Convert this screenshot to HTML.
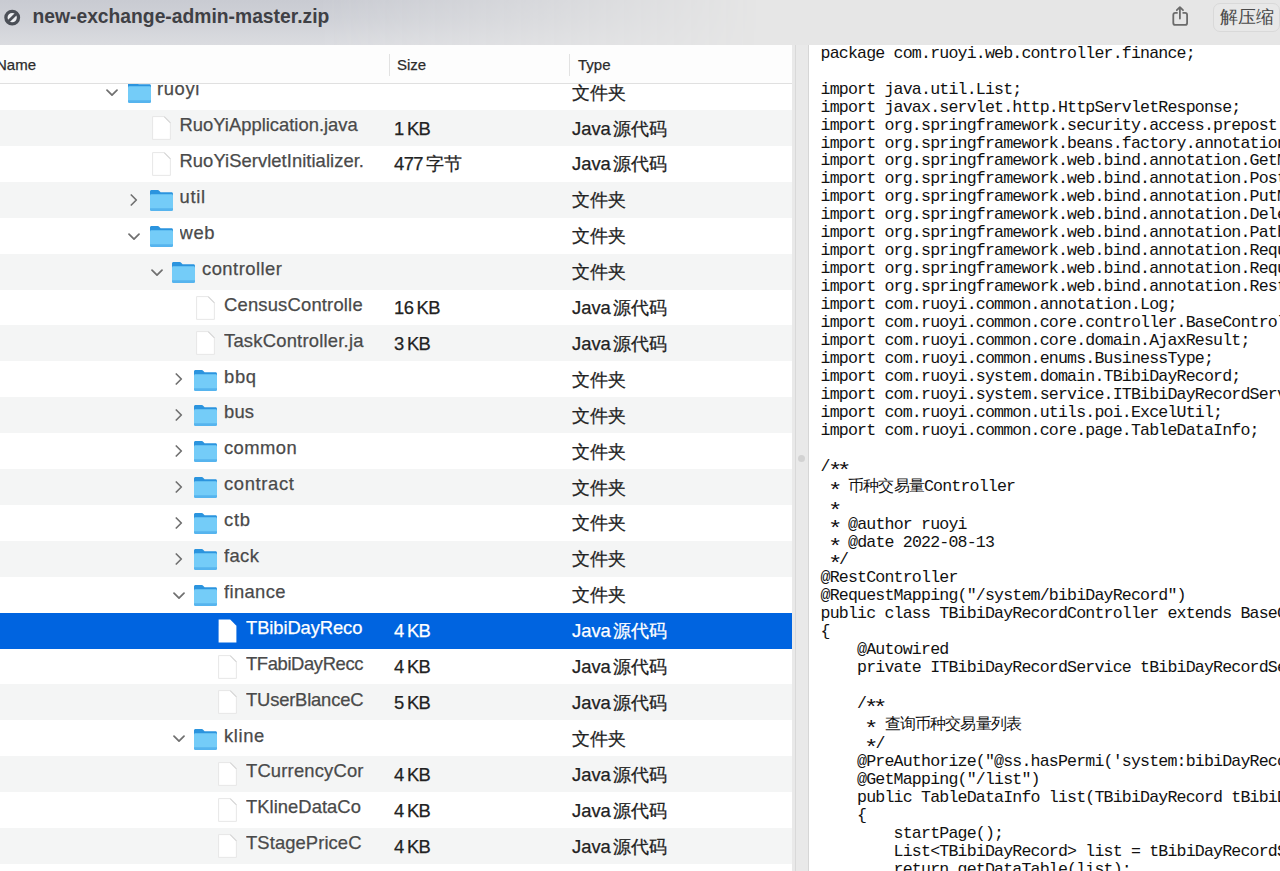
<!DOCTYPE html>
<html><head><meta charset="utf-8"><style>
*{margin:0;padding:0;box-sizing:border-box}
html,body{width:1280px;height:871px;overflow:hidden;background:#fff}
body{position:relative;font-family:"Liberation Sans",sans-serif}
#title{position:absolute;left:0;top:0;width:1280px;height:45px;background:#e6e6e6}
#title .bg{position:absolute;left:0;top:0;width:760px;height:45px;background:linear-gradient(180deg,#c9cbd2 0%,#cfd1d7 45%,#dbdce0 100%);-webkit-mask-image:linear-gradient(90deg,#000 0%,#000 42%,rgba(0,0,0,0.6) 65%,transparent 100%)}
#title .t{position:absolute;left:32.5px;top:5.2px;font-size:19.3px;font-weight:bold;color:#3f4045;line-height:24px;white-space:nowrap}
#left{position:absolute;left:0;top:45px;width:792px;height:826px;overflow:hidden;background:#fff}
#hdr{position:absolute;left:0;top:0;width:792px;height:39px;background:#fdfdfd;border-bottom:1px solid #e0e0e0;z-index:5}
#hdr span{position:absolute;top:11px;font-size:15px;color:#2c2c2c;line-height:18px}
#hdr i{position:absolute;top:9px;width:1px;height:22px;background:#e2e2e2}
.row{position:absolute;left:0;width:792px;height:36px}
.g{background:#f4f5f5}
.sel{background:#0064e0}
.row .n{position:absolute;top:4.3px;font-size:18.4px;line-height:22px;color:#4a4a4a;white-space:nowrap;overflow:hidden;width:auto}
.row .s{position:absolute;left:394px;word-spacing:-1.2px;letter-spacing:-0.6px;top:7.5px;font-size:18.4px;line-height:22px;color:#222;white-space:nowrap}
.row .ty{position:absolute;left:572px;word-spacing:-3px;top:7.5px;font-size:18.4px;line-height:22px;color:#222;white-space:nowrap}
.sel .n,.sel .s,.sel .ty{color:#fff}
.row .n,.row .s,.row .ty,#hdr span{-webkit-text-stroke:0.25px currentColor}
.row svg{position:absolute}
#div{position:absolute;left:792px;top:45px;width:17px;height:826px;background:#e9e9e9}
#div .l1{position:absolute;left:3px;top:0;width:1px;height:826px;background:#d9d9d9}
#div .l2{position:absolute;left:16px;top:0;width:1px;height:826px;background:#d6d6d6}
#div .dot{position:absolute;left:6px;top:410px;width:7px;height:7px;border-radius:50%;background:#d2d2d2}
#code{position:absolute;left:809px;top:45px;width:471px;height:826px;background:#fff;overflow:hidden}
#code .cj{font-size:15.7px}
#code .ast{display:inline-block;transform:translateY(4.9px) scale(1.45,1.2)}
#code div{position:absolute;left:11.6px;font-family:"Liberation Mono",monospace;font-size:16.6px;letter-spacing:-0.83px;line-height:18px;color:#111;white-space:pre}
</style></head><body>

<div id="title"><div class="bg"></div><svg style="position:absolute;left:4px;top:9px" width="17" height="17" viewBox="0 0 17 17"><circle cx="8.2" cy="8.6" r="6.3" fill="#eeeff2" stroke="#4b4f57" stroke-width="3.3"/><path d="M4.6 12.3L12 4.9" stroke="#4b4f57" stroke-width="2.8"/></svg><div class="t">new-exchange-admin-master.zip</div>
<svg style="position:absolute;left:1164px;top:0px" width="32" height="32" viewBox="0 0 32 32"><path d="M13.7 12.9H11.3A2 2 0 0 0 9.3 14.9V22.9A2 2 0 0 0 11.3 24.9H21.1A2 2 0 0 0 23.1 22.9V14.9A2 2 0 0 0 21.1 12.9H18.5" fill="none" stroke="#6b6b6b" stroke-width="1.8"/><path d="M15.9 7.4V18.6M12.8 10.2L15.9 7.1L19 10.2" fill="none" stroke="#6b6b6b" stroke-width="1.8" stroke-linecap="round" stroke-linejoin="round"/></svg>
<div style="position:absolute;left:1212.5px;top:3px;width:67px;height:29px;border-radius:7px;background:#e8e8e8;border:1px solid #d9d9d9"></div><div style="position:absolute;left:1219.5px;top:6px;font-size:18px;line-height:22px;color:#4a4a4a;white-space:nowrap">解压缩</div>
</div>
<div id="left">
<div class="row" style="top:29.10px"><svg style="left:105.5px;top:15px" width="12" height="8"><path d="M1 1.2l5 5 5-5" fill="none" stroke="#707070" stroke-width="1.7" stroke-linecap="round" stroke-linejoin="round"/></svg><svg style="left:128px;top:8.3px" width="23" height="21"><path d="M0 1.6C0 0.6 0.6 0 1.6 0H7.6C8.4 0 8.9 0.3 9.4 0.9L10.6 2.3H21.4C22.4 2.3 23 2.9 23 3.9V8H0Z" fill="#2b94de"/><rect x="0" y="4.2" width="23" height="16.8" rx="1.4" fill="#74ccf8"/><path d="M0 18.2H23V19.6C23 20.5 22.5 21 21.6 21H1.4C0.5 21 0 20.5 0 19.6Z" fill="#56b4ee"/></svg><div class="n" style="left:157px;width:209.0px;letter-spacing:0.6px">ruoyi</div><div class="ty">文件夹</div></div>
<div class="row g" style="top:65.00px"><svg style="left:151.5px;top:6px" width="19" height="24"><path d="M0.6 0.6h11.6l6.2 6.2v16.6h-17.8z" fill="#ffffff" stroke="#e4e4e4" stroke-width="0.9"/><path d="M12.2 0.6l6.2 6.2" stroke="#d6d6d6" stroke-width="1.1"/></svg><div class="n" style="left:179.5px;width:186.5px;letter-spacing:0px">RuoYiApplication.java</div><div class="s">1 KB</div><div class="ty">Java 源代码</div></div>
<div class="row" style="top:100.90px"><svg style="left:151.5px;top:6px" width="19" height="24"><path d="M0.6 0.6h11.6l6.2 6.2v16.6h-17.8z" fill="#ffffff" stroke="#e4e4e4" stroke-width="0.9"/><path d="M12.2 0.6l6.2 6.2" stroke="#d6d6d6" stroke-width="1.1"/></svg><div class="n" style="left:179.5px;width:186.5px;letter-spacing:0.05px">RuoYiServletInitializer.</div><div class="s">477 字节</div><div class="ty">Java 源代码</div></div>
<div class="row g" style="top:136.80px"><svg style="left:130.0px;top:12px" width="8" height="12"><path d="M1.3 1l5 5-5 5" fill="none" stroke="#707070" stroke-width="1.7" stroke-linecap="round" stroke-linejoin="round"/></svg><svg style="left:150px;top:8.3px" width="23" height="21"><path d="M0 1.6C0 0.6 0.6 0 1.6 0H7.6C8.4 0 8.9 0.3 9.4 0.9L10.6 2.3H21.4C22.4 2.3 23 2.9 23 3.9V8H0Z" fill="#2b94de"/><rect x="0" y="4.2" width="23" height="16.8" rx="1.4" fill="#74ccf8"/><path d="M0 18.2H23V19.6C23 20.5 22.5 21 21.6 21H1.4C0.5 21 0 20.5 0 19.6Z" fill="#56b4ee"/></svg><div class="n" style="left:179.5px;width:186.5px;letter-spacing:0.7px">util</div><div class="ty">文件夹</div></div>
<div class="row" style="top:172.70px"><svg style="left:128.0px;top:15px" width="12" height="8"><path d="M1 1.2l5 5 5-5" fill="none" stroke="#707070" stroke-width="1.7" stroke-linecap="round" stroke-linejoin="round"/></svg><svg style="left:150px;top:8.3px" width="23" height="21"><path d="M0 1.6C0 0.6 0.6 0 1.6 0H7.6C8.4 0 8.9 0.3 9.4 0.9L10.6 2.3H21.4C22.4 2.3 23 2.9 23 3.9V8H0Z" fill="#2b94de"/><rect x="0" y="4.2" width="23" height="16.8" rx="1.4" fill="#74ccf8"/><path d="M0 18.2H23V19.6C23 20.5 22.5 21 21.6 21H1.4C0.5 21 0 20.5 0 19.6Z" fill="#56b4ee"/></svg><div class="n" style="left:179.5px;width:186.5px;letter-spacing:0.6px">web</div><div class="ty">文件夹</div></div>
<div class="row g" style="top:208.60px"><svg style="left:150.5px;top:15px" width="12" height="8"><path d="M1 1.2l5 5 5-5" fill="none" stroke="#707070" stroke-width="1.7" stroke-linecap="round" stroke-linejoin="round"/></svg><svg style="left:172px;top:8.3px" width="23" height="21"><path d="M0 1.6C0 0.6 0.6 0 1.6 0H7.6C8.4 0 8.9 0.3 9.4 0.9L10.6 2.3H21.4C22.4 2.3 23 2.9 23 3.9V8H0Z" fill="#2b94de"/><rect x="0" y="4.2" width="23" height="16.8" rx="1.4" fill="#74ccf8"/><path d="M0 18.2H23V19.6C23 20.5 22.5 21 21.6 21H1.4C0.5 21 0 20.5 0 19.6Z" fill="#56b4ee"/></svg><div class="n" style="left:202px;width:164.0px;letter-spacing:0.47px">controller</div><div class="ty">文件夹</div></div>
<div class="row" style="top:244.50px"><svg style="left:196.0px;top:6px" width="19" height="24"><path d="M0.6 0.6h11.6l6.2 6.2v16.6h-17.8z" fill="#ffffff" stroke="#e4e4e4" stroke-width="0.9"/><path d="M12.2 0.6l6.2 6.2" stroke="#d6d6d6" stroke-width="1.1"/></svg><div class="n" style="left:224px;width:142.0px;letter-spacing:0.19px">CensusControlle</div><div class="s">16 KB</div><div class="ty">Java 源代码</div></div>
<div class="row g" style="top:280.40px"><svg style="left:196.0px;top:6px" width="19" height="24"><path d="M0.6 0.6h11.6l6.2 6.2v16.6h-17.8z" fill="#ffffff" stroke="#e4e4e4" stroke-width="0.9"/><path d="M12.2 0.6l6.2 6.2" stroke="#d6d6d6" stroke-width="1.1"/></svg><div class="n" style="left:224px;width:142.0px;letter-spacing:0.22px">TaskController.ja</div><div class="s">3 KB</div><div class="ty">Java 源代码</div></div>
<div class="row" style="top:316.30px"><svg style="left:174.5px;top:12px" width="8" height="12"><path d="M1.3 1l5 5-5 5" fill="none" stroke="#707070" stroke-width="1.7" stroke-linecap="round" stroke-linejoin="round"/></svg><svg style="left:194px;top:8.3px" width="23" height="21"><path d="M0 1.6C0 0.6 0.6 0 1.6 0H7.6C8.4 0 8.9 0.3 9.4 0.9L10.6 2.3H21.4C22.4 2.3 23 2.9 23 3.9V8H0Z" fill="#2b94de"/><rect x="0" y="4.2" width="23" height="16.8" rx="1.4" fill="#74ccf8"/><path d="M0 18.2H23V19.6C23 20.5 22.5 21 21.6 21H1.4C0.5 21 0 20.5 0 19.6Z" fill="#56b4ee"/></svg><div class="n" style="left:224px;width:142.0px;letter-spacing:0.7px">bbq</div><div class="ty">文件夹</div></div>
<div class="row g" style="top:352.20px"><svg style="left:174.5px;top:12px" width="8" height="12"><path d="M1.3 1l5 5-5 5" fill="none" stroke="#707070" stroke-width="1.7" stroke-linecap="round" stroke-linejoin="round"/></svg><svg style="left:194px;top:8.3px" width="23" height="21"><path d="M0 1.6C0 0.6 0.6 0 1.6 0H7.6C8.4 0 8.9 0.3 9.4 0.9L10.6 2.3H21.4C22.4 2.3 23 2.9 23 3.9V8H0Z" fill="#2b94de"/><rect x="0" y="4.2" width="23" height="16.8" rx="1.4" fill="#74ccf8"/><path d="M0 18.2H23V19.6C23 20.5 22.5 21 21.6 21H1.4C0.5 21 0 20.5 0 19.6Z" fill="#56b4ee"/></svg><div class="n" style="left:224px;width:142.0px;letter-spacing:0.2px">bus</div><div class="ty">文件夹</div></div>
<div class="row" style="top:388.10px"><svg style="left:174.5px;top:12px" width="8" height="12"><path d="M1.3 1l5 5-5 5" fill="none" stroke="#707070" stroke-width="1.7" stroke-linecap="round" stroke-linejoin="round"/></svg><svg style="left:194px;top:8.3px" width="23" height="21"><path d="M0 1.6C0 0.6 0.6 0 1.6 0H7.6C8.4 0 8.9 0.3 9.4 0.9L10.6 2.3H21.4C22.4 2.3 23 2.9 23 3.9V8H0Z" fill="#2b94de"/><rect x="0" y="4.2" width="23" height="16.8" rx="1.4" fill="#74ccf8"/><path d="M0 18.2H23V19.6C23 20.5 22.5 21 21.6 21H1.4C0.5 21 0 20.5 0 19.6Z" fill="#56b4ee"/></svg><div class="n" style="left:224px;width:142.0px;letter-spacing:0.42px">common</div><div class="ty">文件夹</div></div>
<div class="row g" style="top:424.00px"><svg style="left:174.5px;top:12px" width="8" height="12"><path d="M1.3 1l5 5-5 5" fill="none" stroke="#707070" stroke-width="1.7" stroke-linecap="round" stroke-linejoin="round"/></svg><svg style="left:194px;top:8.3px" width="23" height="21"><path d="M0 1.6C0 0.6 0.6 0 1.6 0H7.6C8.4 0 8.9 0.3 9.4 0.9L10.6 2.3H21.4C22.4 2.3 23 2.9 23 3.9V8H0Z" fill="#2b94de"/><rect x="0" y="4.2" width="23" height="16.8" rx="1.4" fill="#74ccf8"/><path d="M0 18.2H23V19.6C23 20.5 22.5 21 21.6 21H1.4C0.5 21 0 20.5 0 19.6Z" fill="#56b4ee"/></svg><div class="n" style="left:224px;width:142.0px;letter-spacing:0.64px">contract</div><div class="ty">文件夹</div></div>
<div class="row" style="top:459.90px"><svg style="left:174.5px;top:12px" width="8" height="12"><path d="M1.3 1l5 5-5 5" fill="none" stroke="#707070" stroke-width="1.7" stroke-linecap="round" stroke-linejoin="round"/></svg><svg style="left:194px;top:8.3px" width="23" height="21"><path d="M0 1.6C0 0.6 0.6 0 1.6 0H7.6C8.4 0 8.9 0.3 9.4 0.9L10.6 2.3H21.4C22.4 2.3 23 2.9 23 3.9V8H0Z" fill="#2b94de"/><rect x="0" y="4.2" width="23" height="16.8" rx="1.4" fill="#74ccf8"/><path d="M0 18.2H23V19.6C23 20.5 22.5 21 21.6 21H1.4C0.5 21 0 20.5 0 19.6Z" fill="#56b4ee"/></svg><div class="n" style="left:224px;width:142.0px;letter-spacing:0.7px">ctb</div><div class="ty">文件夹</div></div>
<div class="row g" style="top:495.80px"><svg style="left:174.5px;top:12px" width="8" height="12"><path d="M1.3 1l5 5-5 5" fill="none" stroke="#707070" stroke-width="1.7" stroke-linecap="round" stroke-linejoin="round"/></svg><svg style="left:194px;top:8.3px" width="23" height="21"><path d="M0 1.6C0 0.6 0.6 0 1.6 0H7.6C8.4 0 8.9 0.3 9.4 0.9L10.6 2.3H21.4C22.4 2.3 23 2.9 23 3.9V8H0Z" fill="#2b94de"/><rect x="0" y="4.2" width="23" height="16.8" rx="1.4" fill="#74ccf8"/><path d="M0 18.2H23V19.6C23 20.5 22.5 21 21.6 21H1.4C0.5 21 0 20.5 0 19.6Z" fill="#56b4ee"/></svg><div class="n" style="left:224px;width:142.0px;letter-spacing:0.37px">fack</div><div class="ty">文件夹</div></div>
<div class="row" style="top:531.70px"><svg style="left:172.5px;top:15px" width="12" height="8"><path d="M1 1.2l5 5 5-5" fill="none" stroke="#707070" stroke-width="1.7" stroke-linecap="round" stroke-linejoin="round"/></svg><svg style="left:194px;top:8.3px" width="23" height="21"><path d="M0 1.6C0 0.6 0.6 0 1.6 0H7.6C8.4 0 8.9 0.3 9.4 0.9L10.6 2.3H21.4C22.4 2.3 23 2.9 23 3.9V8H0Z" fill="#2b94de"/><rect x="0" y="4.2" width="23" height="16.8" rx="1.4" fill="#74ccf8"/><path d="M0 18.2H23V19.6C23 20.5 22.5 21 21.6 21H1.4C0.5 21 0 20.5 0 19.6Z" fill="#56b4ee"/></svg><div class="n" style="left:224px;width:142.0px;letter-spacing:0.35px">finance</div><div class="ty">文件夹</div></div>
<div class="row sel" style="top:567.60px"><svg style="left:218.0px;top:6px" width="19" height="24"><path d="M0.6 0.6h11.6l6.2 6.2v16.6h-17.8z" fill="#ffffff"/></svg><div class="n" style="left:246px;width:120.0px;letter-spacing:-0.1px">TBibiDayReco</div><div class="s">4 KB</div><div class="ty">Java 源代码</div></div>
<div class="row" style="top:603.50px"><svg style="left:218.0px;top:6px" width="19" height="24"><path d="M0.6 0.6h11.6l6.2 6.2v16.6h-17.8z" fill="#ffffff" stroke="#e4e4e4" stroke-width="0.9"/><path d="M12.2 0.6l6.2 6.2" stroke="#d6d6d6" stroke-width="1.1"/></svg><div class="n" style="left:246px;width:120.0px;letter-spacing:-0.38px">TFabiDayRecc</div><div class="s">4 KB</div><div class="ty">Java 源代码</div></div>
<div class="row g" style="top:639.40px"><svg style="left:218.0px;top:6px" width="19" height="24"><path d="M0.6 0.6h11.6l6.2 6.2v16.6h-17.8z" fill="#ffffff" stroke="#e4e4e4" stroke-width="0.9"/><path d="M12.2 0.6l6.2 6.2" stroke="#d6d6d6" stroke-width="1.1"/></svg><div class="n" style="left:246px;width:120.0px;letter-spacing:-0.19px">TUserBlanceC</div><div class="s">5 KB</div><div class="ty">Java 源代码</div></div>
<div class="row" style="top:675.30px"><svg style="left:172.5px;top:15px" width="12" height="8"><path d="M1 1.2l5 5 5-5" fill="none" stroke="#707070" stroke-width="1.7" stroke-linecap="round" stroke-linejoin="round"/></svg><svg style="left:194px;top:8.3px" width="23" height="21"><path d="M0 1.6C0 0.6 0.6 0 1.6 0H7.6C8.4 0 8.9 0.3 9.4 0.9L10.6 2.3H21.4C22.4 2.3 23 2.9 23 3.9V8H0Z" fill="#2b94de"/><rect x="0" y="4.2" width="23" height="16.8" rx="1.4" fill="#74ccf8"/><path d="M0 18.2H23V19.6C23 20.5 22.5 21 21.6 21H1.4C0.5 21 0 20.5 0 19.6Z" fill="#56b4ee"/></svg><div class="n" style="left:224px;width:142.0px;letter-spacing:0.6px">kline</div><div class="ty">文件夹</div></div>
<div class="row g" style="top:711.20px"><svg style="left:218.0px;top:6px" width="19" height="24"><path d="M0.6 0.6h11.6l6.2 6.2v16.6h-17.8z" fill="#ffffff" stroke="#e4e4e4" stroke-width="0.9"/><path d="M12.2 0.6l6.2 6.2" stroke="#d6d6d6" stroke-width="1.1"/></svg><div class="n" style="left:246px;width:120.0px;letter-spacing:0.18px">TCurrencyCor</div><div class="s">4 KB</div><div class="ty">Java 源代码</div></div>
<div class="row" style="top:747.10px"><svg style="left:218.0px;top:6px" width="19" height="24"><path d="M0.6 0.6h11.6l6.2 6.2v16.6h-17.8z" fill="#ffffff" stroke="#e4e4e4" stroke-width="0.9"/><path d="M12.2 0.6l6.2 6.2" stroke="#d6d6d6" stroke-width="1.1"/></svg><div class="n" style="left:246px;width:120.0px;letter-spacing:0.04px">TKlineDataCo</div><div class="s">4 KB</div><div class="ty">Java 源代码</div></div>
<div class="row g" style="top:783.00px"><svg style="left:218.0px;top:6px" width="19" height="24"><path d="M0.6 0.6h11.6l6.2 6.2v16.6h-17.8z" fill="#ffffff" stroke="#e4e4e4" stroke-width="0.9"/><path d="M12.2 0.6l6.2 6.2" stroke="#d6d6d6" stroke-width="1.1"/></svg><div class="n" style="left:246px;width:120.0px;letter-spacing:0.09px">TStagePriceC</div><div class="s">4 KB</div><div class="ty">Java 源代码</div></div>
<div id="hdr"><span style="left:-4px">Name</span><i style="left:389px"></i><span style="left:397px">Size</span><i style="left:569px"></i><span style="left:578px">Type</span></div>
</div>
<div id="div"><div class="l1"></div><div class="l2"></div><div class="dot"></div></div>
<div id="code"><div style="top:-0.22px">package com.ruoyi.web.controller.finance;</div><div style="top:35.68px">import java.util.List;</div><div style="top:53.63px">import javax.servlet.http.HttpServletResponse;</div><div style="top:71.58px">import org.springframework.security.access.prepost.PreAuthorize;</div><div style="top:89.53px">import org.springframework.beans.factory.annotation.Autowired;</div><div style="top:107.48px">import org.springframework.web.bind.annotation.GetMapping;</div><div style="top:125.43px">import org.springframework.web.bind.annotation.PostMapping;</div><div style="top:143.38px">import org.springframework.web.bind.annotation.PutMapping;</div><div style="top:161.33px">import org.springframework.web.bind.annotation.DeleteMapping;</div><div style="top:179.28px">import org.springframework.web.bind.annotation.PathVariable;</div><div style="top:197.23px">import org.springframework.web.bind.annotation.RequestBody;</div><div style="top:215.18px">import org.springframework.web.bind.annotation.RequestMapping;</div><div style="top:233.13px">import org.springframework.web.bind.annotation.RestController;</div><div style="top:251.08px">import com.ruoyi.common.annotation.Log;</div><div style="top:269.03px">import com.ruoyi.common.core.controller.BaseController;</div><div style="top:286.98px">import com.ruoyi.common.core.domain.AjaxResult;</div><div style="top:304.93px">import com.ruoyi.common.enums.BusinessType;</div><div style="top:322.88px">import com.ruoyi.system.domain.TBibiDayRecord;</div><div style="top:340.83px">import com.ruoyi.system.service.ITBibiDayRecordService;</div><div style="top:358.78px">import com.ruoyi.common.utils.poi.ExcelUtil;</div><div style="top:376.73px">import com.ruoyi.common.core.page.TableDataInfo;</div><div style="top:412.63px">/<span class="ast">*</span><span class="ast">*</span></div><div style="top:433.28px"> <span class="ast">*</span> <span class="cj">币种交易量</span>Controller</div><div style="top:452.63px"> <span class="ast">*</span> </div><div style="top:470.58px"> <span class="ast">*</span> @author ruoyi</div><div style="top:488.53px"> <span class="ast">*</span> @date 2022-08-13</div><div style="top:506.48px"> <span class="ast">*</span>/</div><div style="top:524.43px">@RestController</div><div style="top:542.38px">@RequestMapping(&quot;/system/bibiDayRecord&quot;)</div><div style="top:560.33px">public class TBibiDayRecordController extends BaseController</div><div style="top:578.28px">{</div><div style="top:596.23px">    @Autowired</div><div style="top:614.18px">    private ITBibiDayRecordService tBibiDayRecordService;</div><div style="top:650.08px">    /<span class="ast">*</span><span class="ast">*</span></div><div style="top:670.73px">     <span class="ast">*</span> <span class="cj">查询币种交易量列表</span></div><div style="top:690.08px">     <span class="ast">*</span>/</div><div style="top:708.03px">    @PreAuthorize(&quot;@ss.hasPermi(&#x27;system:bibiDayRecord:list&#x27;)&quot;)</div><div style="top:725.98px">    @GetMapping(&quot;/list&quot;)</div><div style="top:743.93px">    public TableDataInfo list(TBibiDayRecord tBibiDayRecord)</div><div style="top:761.88px">    {</div><div style="top:779.83px">        startPage();</div><div style="top:797.78px">        List&lt;TBibiDayRecord&gt; list = tBibiDayRecordService.selectTBibiDayRecordList(tBibiDayRecord);</div><div style="top:815.73px">        return getDataTable(list);</div><div style="top:833.68px">    }</div></div>
</body></html>
